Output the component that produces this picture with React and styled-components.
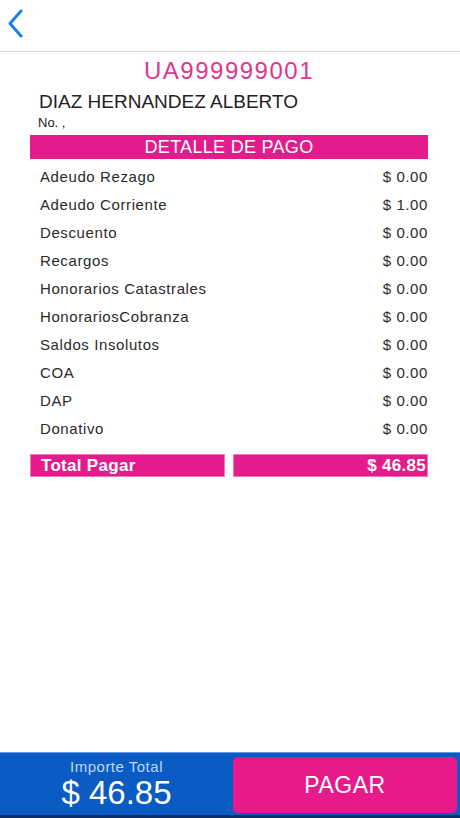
import React from "react";
import styled, { createGlobalStyle } from "styled-components";

const Global = createGlobalStyle`
  html, body { margin: 0; padding: 0; background: #fff; }
  body { font-family: "Liberation Sans", Arial, sans-serif; }
  #root { height: 818px; }
`;

const Page = styled.div`
  height: 818px;
  display: flex;
  flex-direction: column;
  background: #fff;
`;

const Header = styled.div`
  height: 52px;
  border-bottom: 1px solid #d4d4d4;
  display: flex;
  align-items: flex-start;
  padding: 9px 0 0 7px;
  box-sizing: border-box;
`;

const BackButton = styled.button`
  border: 0;
  background: none;
  padding: 0;
  width: 18px;
  height: 30px;
  cursor: pointer;
`;

const Content = styled.div`
  flex: 1;
  padding: 0 32px 0 30px;
  display: flex;
  flex-direction: column;
`;

const Title = styled.div`
  margin-top: 5px;
  line-height: 28px;
  text-align: center;
  color: #e0368f;
  font-size: 24px;
  letter-spacing: 1.5px;
`;

const Name = styled.div`
  margin-top: 5px;
  line-height: 24px;
  padding-left: 9px;
  color: #222;
  font-size: 19px;
`;

const Number = styled.div`
  line-height: 18px;
  padding-left: 8px;
  color: #222;
  font-size: 13px;
`;

const SectionBar = styled.div`
  margin-top: 3px;
  height: 24px;
  background: #e31b8c;
  color: #fff;
  text-align: center;
  font-size: 18px;
  line-height: 25px;
  letter-spacing: 0.3px;
`;

const Rows = styled.div`
  margin-top: 3px;
  display: flex;
  flex-direction: column;
`;

const Row = styled.div`
  height: 28px;
  display: flex;
  align-items: center;
  justify-content: space-between;
  padding-left: 10px;
  color: #2a2a2a;
  font-size: 15px;
  letter-spacing: 0.6px;
`;

const TotalRow = styled.div`
  margin-top: 12px;
  display: grid;
  grid-template-columns: 1fr 1fr;
  gap: 8px;
`;

const TotalCell = styled.div`
  height: 23px;
  box-sizing: border-box;
  background: #e31b8c;
  border: 1px solid #f07ab9;
  color: #fff;
  font-size: 17px;
  font-weight: bold;
  line-height: 21px;
  letter-spacing: 0.3px;
  padding: ${(p) => (p.$right ? "0 1px 0 0" : "0 0 0 10px")};
  text-align: ${(p) => (p.$right ? "right" : "left")};
`;

const Footer = styled.div`
  height: 66px;
  box-sizing: border-box;
  background: #0b5cc2;
  border-top: 1px solid #5a9ae6;
  border-bottom: 3px solid #0b2f66;
  display: flex;
  align-items: stretch;
  padding: 4px 3px 2px 0;
`;

const TotalBlock = styled.div`
  width: 233px;
  display: flex;
  flex-direction: column;
  align-items: center;
  justify-content: center;
  padding-bottom: 2px;
`;

const TotalLabel = styled.div`
  color: #bcd8f7;
  font-size: 15px;
  letter-spacing: 0.5px;
  line-height: 18px;
`;

const TotalAmount = styled.div`
  color: #fff;
  font-size: 33px;
  line-height: 34px;
`;

const PayButton = styled.button`
  flex: 1;
  border: 0;
  border-radius: 5px;
  background: #e8198b;
  color: #fff;
  font-family: "Liberation Sans", Arial, sans-serif;
  font-size: 23px;
  letter-spacing: 0.5px;
  cursor: pointer;
`;

const items = [
  ["Adeudo Rezago", "$ 0.00"],
  ["Adeudo Corriente", "$ 1.00"],
  ["Descuento", "$ 0.00"],
  ["Recargos", "$ 0.00"],
  ["Honorarios Catastrales", "$ 0.00"],
  ["HonorariosCobranza", "$ 0.00"],
  ["Saldos Insolutos", "$ 0.00"],
  ["COA", "$ 0.00"],
  ["DAP", "$ 0.00"],
  ["Donativo", "$ 0.00"],
];

export default function App() {
  return (
    <Page>
      <Global />
      <Header>
        <BackButton aria-label="Atrás">
          <svg width="18" height="30" viewBox="0 0 18 30">
            <polyline
              points="14,2 3,14.5 14,27"
              fill="none"
              stroke="#1b7fe3"
              strokeWidth="3"
              strokeLinecap="round"
              strokeLinejoin="round"
            />
          </svg>
        </BackButton>
      </Header>
      <Content>
        <Title>UA999999001</Title>
        <Name>DIAZ HERNANDEZ ALBERTO</Name>
        <Number>No. ,</Number>
        <SectionBar>DETALLE DE PAGO</SectionBar>
        <Rows>
          {items.map(([label, value]) => (
            <Row key={label}>
              <span>{label}</span>
              <span>{value}</span>
            </Row>
          ))}
        </Rows>
        <TotalRow>
          <TotalCell>Total Pagar</TotalCell>
          <TotalCell $right>$ 46.85</TotalCell>
        </TotalRow>
      </Content>
      <Footer>
        <TotalBlock>
          <TotalLabel>Importe Total</TotalLabel>
          <TotalAmount>$ 46.85</TotalAmount>
        </TotalBlock>
        <PayButton>PAGAR</PayButton>
      </Footer>
    </Page>
  );
}
